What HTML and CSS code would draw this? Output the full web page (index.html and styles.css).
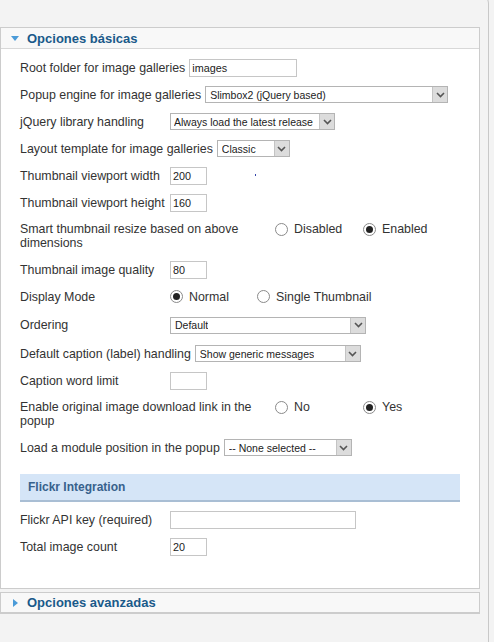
FILE: index.html
```html
<!DOCTYPE html>
<html lang="es">
<head>
<meta charset="utf-8">
<title>Opciones</title>
<link rel="stylesheet" href="styles.css">
</head>
<body>
<div class="wrap">
  <div class="panel">
    <div class="ph">
      <span class="tri-down"></span>
      <span class="ph-title">Opciones básicas</span>
    </div>
    <div class="pb">
      <div class="row">
        <span class="lbl">Root folder for image galleries</span>
        <span class="inp w108">images</span>
      </div>
      <div class="row">
        <span class="lbl">Popup engine for image galleries</span>
        <span class="sel w243"><span class="sel-t">Slimbox2 (jQuery based)</span><span class="arr"><svg width="9" height="6" viewBox="0 0 9 6"><path d="M1 1 L4.5 4.5 L8 1" fill="none" stroke="#555" stroke-width="1.6"/></svg></span></span>
      </div>
      <div class="row">
        <span class="lbl">jQuery library handling</span>
        <span class="sel w165"><span class="sel-t">Always load the latest release</span><span class="arr"><svg width="9" height="6" viewBox="0 0 9 6"><path d="M1 1 L4.5 4.5 L8 1" fill="none" stroke="#555" stroke-width="1.6"/></svg></span></span>
      </div>
      <div class="row">
        <span class="lbl">Layout template for image galleries</span>
        <span class="sel w73"><span class="sel-t">Classic</span><span class="arr"><svg width="9" height="6" viewBox="0 0 9 6"><path d="M1 1 L4.5 4.5 L8 1" fill="none" stroke="#555" stroke-width="1.6"/></svg></span></span>
      </div>
      <div class="row">
        <span class="lbl">Thumbnail viewport width</span>
        <span class="inp w37">200</span>
        <span class="dot"></span>
      </div>
      <div class="row">
        <span class="lbl">Thumbnail viewport height</span>
        <span class="inp w37">160</span>
      </div>
      <div class="row row2">
        <span class="lbl lbl-wide">Smart thumbnail resize based on above dimensions</span>
        <span class="rad"><span class="circ"></span>Disabled</span>
        <span class="rad"><span class="circ on"></span>Enabled</span>
      </div>
      <div class="row">
        <span class="lbl">Thumbnail image quality</span>
        <span class="inp w37">80</span>
      </div>
      <div class="row">
        <span class="lbl">Display Mode</span>
        <span class="rad rad-n"><span class="circ on"></span>Normal</span>
        <span class="rad"><span class="circ"></span>Single Thumbnail</span>
      </div>
      <div class="row row-tall">
        <span class="lbl">Ordering</span>
        <span class="sel w196"><span class="sel-t">Default</span><span class="arr"><svg width="9" height="6" viewBox="0 0 9 6"><path d="M1 1 L4.5 4.5 L8 1" fill="none" stroke="#555" stroke-width="1.6"/></svg></span></span>
      </div>
      <div class="row">
        <span class="lbl">Default caption (label) handling</span>
        <span class="sel w166"><span class="sel-t">Show generic messages</span><span class="arr"><svg width="9" height="6" viewBox="0 0 9 6"><path d="M1 1 L4.5 4.5 L8 1" fill="none" stroke="#555" stroke-width="1.6"/></svg></span></span>
      </div>
      <div class="row">
        <span class="lbl">Caption word limit</span>
        <span class="inp w37"></span>
      </div>
      <div class="row row2">
        <span class="lbl lbl-wide">Enable original image download link in the popup</span>
        <span class="rad"><span class="circ"></span>No</span>
        <span class="rad"><span class="circ on"></span>Yes</span>
      </div>
      <div class="row">
        <span class="lbl">Load a module position in the popup</span>
        <span class="sel w128"><span class="sel-t">-- None selected --</span><span class="arr"><svg width="9" height="6" viewBox="0 0 9 6"><path d="M1 1 L4.5 4.5 L8 1" fill="none" stroke="#555" stroke-width="1.6"/></svg></span></span>
      </div>
      <div class="subhead">Flickr Integration</div>
      <div class="row">
        <span class="lbl">Flickr API key (required)</span>
        <span class="inp w186"></span>
      </div>
      <div class="row">
        <span class="lbl">Total image count</span>
        <span class="inp w37">20</span>
      </div>
    </div>
  </div>
  <div class="panel panel2">
    <div class="ph">
      <span class="tri-right"></span>
      <span class="ph-title">Opciones avanzadas</span>
    </div>
  </div>
</div>
</body>
</html>
```

FILE: styles.css
```css
html, body {
  margin: 0;
  padding: 0;
  background: #f3f3f3;
}
body {
  font-family: "Liberation Sans", Arial, sans-serif;
  font-size: 12.4px;
  color: #333;
  height: 642px;
  overflow: hidden;
}
.wrap {
  margin-top: -8px;
  width: 489px;
  height: 650px;
  border-top: 1px solid #d0d0d0;
  border-right: 1px solid #c8c8c8;
  border-top-right-radius: 12px;
  padding-top: 34px;
  box-sizing: border-box;
}
.panel {
  width: 480px;
  box-sizing: border-box;
  border: 1px solid #cccccc;
  background: #fff;
}
.panel2 {
  margin-top: 3px;
  border-bottom: 2px solid #cccccc;
}
.ph {
  height: 20px;
  background: #f8f8f8;
  border-bottom: 1px solid #d8d8d8;
  display: flex;
  align-items: center;
  padding-left: 10px;
}
.panel2 .ph {
  border-bottom: none;
  height: 19px;
}
.ph-title {
  font-size: 13px;
  font-weight: bold;
  color: #1a5a8a;
  margin-left: 8px;
}
.tri-down {
  width: 0;
  height: 0;
  border-left: 4px solid transparent;
  border-right: 4px solid transparent;
  border-top: 5px solid #4b9bd8;
}
.tri-right {
  width: 0;
  height: 0;
  border-top: 4px solid transparent;
  border-bottom: 4px solid transparent;
  border-left: 5px solid #4b9bd8;
  margin-left: 2px;
  margin-right: 1px;
}
.pb {
  padding: 5px 19px 28px 19px;
}
.row {
  display: flex;
  align-items: center;
  min-height: 27px;
  position: relative;
}
.row-tall {
  min-height: 30px;
}
.row2 {
  align-items: flex-start;
  padding: 6px 0 6px 0;
  box-sizing: border-box;
}
.lbl {
  min-width: 146px;
  padding-right: 4px;
  white-space: nowrap;
  line-height: 14px;
}
.lbl-wide {
  width: 255px;
  min-width: 255px;
  padding-right: 0;
  white-space: normal;
  line-height: 14px;
}
.row2 .rad {
  line-height: 14px;
  height: 14px;
}
.inp {
  display: inline-block;
  box-sizing: border-box;
  height: 18px;
  border: 1px solid #c6c6c6;
  background: #fff;
  font-size: 10.8px;
  line-height: 16px;
  padding-left: 2px;
  color: #222;
}
.w37 { width: 37px; }
.w108 { width: 108px; }
.w186 { width: 186px; }
.sel {
  display: inline-flex;
  align-items: center;
  justify-content: space-between;
  box-sizing: border-box;
  height: 17px;
  border: 1px solid #b4b4b4;
  background: #fff;
  font-size: 10.5px;
  color: #222;
  padding-left: 4px;
}
.sel-t {
  white-space: nowrap;
  overflow: hidden;
}
.arr {
  width: 15px;
  height: 15px;
  box-sizing: border-box;
  border-left: 1px solid #c4c4c4;
  background: #dcdcdc;
  display: flex;
  align-items: center;
  justify-content: center;
  margin-left: 3px;
  flex: none;
}
.w243 { width: 243px; }
.w165 { width: 165px; padding-left: 3px; }
.w73 { width: 73px; }
.w196 { width: 196px; }
.w166 { width: 166px; }
.w128 { width: 128px; }
.rad {
  display: inline-flex;
  align-items: center;
  width: 88px;
  white-space: nowrap;
}
.rad-n {
  width: 87px;
}
.circ {
  width: 13px;
  height: 13px;
  box-sizing: border-box;
  border: 1px solid #8a8a8a;
  border-radius: 50%;
  background: #fff;
  margin-right: 6px;
  display: flex;
  align-items: center;
  justify-content: center;
  flex: none;
}
.circ.on::after {
  content: "";
  width: 7px;
  height: 7px;
  border-radius: 50%;
  background: #222;
}
.dot {
  position: absolute;
  left: 235px;
  top: 12px;
  width: 1px;
  height: 2px;
  background: #3344aa;
}
.subhead {
  margin-top: 13px;
  margin-bottom: 4px;
  height: 26px;
  background: #d5e5f7;
  border-bottom: 2px solid #a9bed4;
  color: #38618c;
  font-weight: bold;
  font-size: 12px;
  line-height: 27px;
  padding-left: 8px;
}
```
